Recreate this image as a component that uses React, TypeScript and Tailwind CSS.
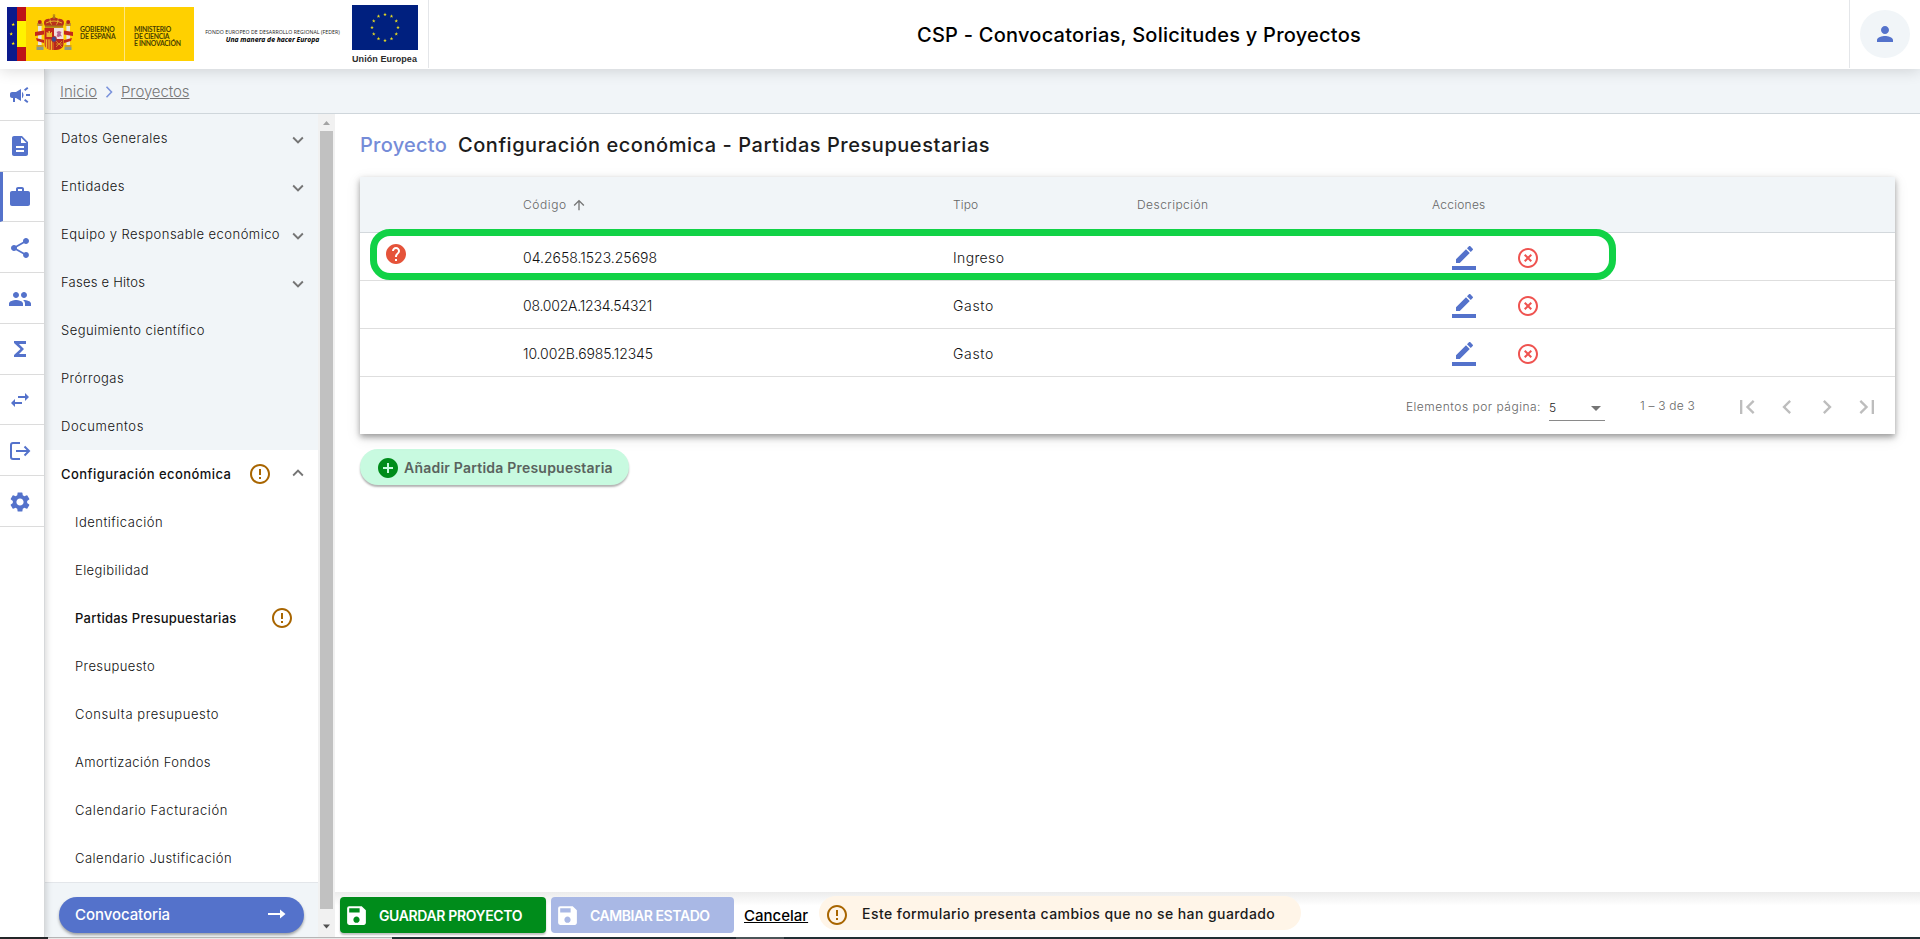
import React from "react";
import {
  MdAddCircle,
  MdArrowDropDown,
  MdArrowUpward,
  MdCampaign,
  MdChevronLeft,
  MdChevronRight,
  MdDescription,
  MdErrorOutline,
  MdExpandLess,
  MdExpandMore,
  MdFirstPage,
  MdFunctions,
  MdHelp,
  MdHighlightOff,
  MdLastPage,
  MdPeople,
  MdPerson,
  MdSave,
  MdSettings,
  MdShare,
  MdSwapHoriz,
  MdWork,
} from "react-icons/md";

function CoatOfArms() {
  return (
    <svg viewBox="0 0 38 38" className="h-[38px] w-[38px]">
      <g>
        <rect x="3" y="10" width="3.6" height="25" fill="#e9e6dc" />
        <rect x="31.4" y="10" width="3.6" height="25" fill="#e9e6dc" />
        <path d="M2 9h5.6v3H2zM30.4 9H36v3h-5.6z" fill="#c8962a" />
        <circle cx="4.8" cy="8" r="2" fill="#b3261c" />
        <circle cx="33.2" cy="8" r="2" fill="#b3261c" />
        <path d="M1.5 33h7v3h-7zM29.5 33h7v3h-7z" fill="#8c9a8a" />
        <path d="M1.5 31h7v2h-7zM29.5 31h7v2h-7z" fill="#d2a021" />
        <path d="M0 18l9-1.6v4L0 22zM38 18l-9-1.6v4l9 1.6z" fill="#c4271b" />
        <path d="M1 24l8 2v3l-7-2zM37 24l-8 2v3l7-2z" fill="#c4271b" />
      </g>
      <path d="M10 12c-3-5 1-8 5-7 1-2 7-2 8 0 4-1 8 2 5 7z" fill="#b8301c" />
      <path d="M11 9q8-4 16 0M15 5.5q0 3 1.5 5M23 5.5q0 3-1.5 5" fill="none" stroke="#e5b52e" strokeWidth="1" />
      <circle cx="19" cy="3.4" r="1.3" fill="#a8791c" />
      <path d="M19 0v3M17.7 1.2h2.6" stroke="#a8791c" strokeWidth=".8" />
      <path d="M10 11.5h18v2.2H10z" fill="#a8791c" />
      <path d="M9.5 14H19v11H9.5z" fill="#c4271b" />
      <path d="M19 14h9.5v11H19z" fill="#f1dfe0" />
      <path d="M9.5 25H19v11c-6 0-9.5-2-9.5-6z" fill="#d4531d" />
      <path d="M19 25h9.5v5c0 4-3.5 6-9.5 6z" fill="#b8281c" />
      <path d="M11.5 23v-5h1v1h1v-2h1.5v2h1v-1h1v5z" fill="#edb92e" />
      <path d="M21.5 22.5l1-3-1-1.5 2.5-1 2.500 1-1 2 1.5 2.5-2-.5-1 1z" fill="#b8618a" />
      <path d="M11.5 25.500v8.500M14 25.500V35M16.500 25.500V36" stroke="#edb92e" strokeWidth="1" />
      <path d="M21 27l6 6M27 27l-6 6M21 30h6.5" stroke="#e09a2a" strokeWidth=".8" />
      <ellipse cx="19" cy="25.2" rx="2.5" ry="3" fill="#3b4c96" stroke="#c4271b" strokeWidth=".8" />
    </svg>
  );
}

const STAR = "M0-1.9L.5-.6 1.8-.6.75.25 1.15 1.55 0 .8-1.15 1.55-.75.25-1.8-.6-.5-.6z";
const EU_STARS = Array.from({ length: 12 }, (_, i) => {
  const a = (i * Math.PI) / 6;
  return { x: 33 + 13 * Math.sin(a), y: 22.5 - 13 * Math.cos(a) };
});

function Header() {
  return (
    <header className="relative z-20 flex h-[69px] shrink-0 bg-white shadow-[0_2px_14px_rgba(0,0,0,0.14)]">
      <div className="flex h-[68px] w-[429px] shrink-0 border-r border-[#e4e6e9] pl-[7px]">
        <div className="mt-[7px] flex h-[54px] w-[187px] bg-[#ffd000]">
          <svg viewBox="0 0 19 54" className="h-[54px] w-[19px] shrink-0">
            <path d="M0 0h10v54H0z" fill="#0b1a8c" />
            <path d="M10 0h9v54h-9z" fill="#be1218" />
            <path d="M10 14h9v26h-9z" fill="#fff200" />
            <path transform="translate(6.2 17.5)" d={STAR} fill="#ffee00" />
            <path transform="translate(4.2 27)" d={STAR} fill="#ffee00" />
            <path transform="translate(6.2 36.5)" d={STAR} fill="#ffee00" />
          </svg>
          <div className="ml-[9px] mt-[7px] shrink-0">
            <CoatOfArms />
          </div>
          <div className="ml-[7px] w-[45px] shrink-0 whitespace-nowrap border-r border-[#ffe680] pt-[19px] font-['Lato'] text-[6.8px] font-bold leading-[7.2px] tracking-[-0.16px] text-[#4a3f00]">
            GOBIERNO
            <br />
            DE ESPAÑA
          </div>
          <div className="ml-[9px] whitespace-nowrap pt-[19px] font-['Lato'] text-[6.8px] font-bold leading-[7.2px] tracking-[-0.24px] text-[#4a3f00]">
            MINISTERIO
            <br />
            DE CIENCIA
            <br />E INNOVACIÓN
          </div>
        </div>
        <div className="ml-[11px] w-[135px] whitespace-nowrap pt-[28px] text-center font-['Open_Sans'] text-[#222]">
          <div className="flex justify-center text-[5.2px] leading-[8px] tracking-[0.06px]">
            FONDO EUROPEO DE DESARROLLO REGIONAL (FEDER)
          </div>
          <div className="text-[6.8px] font-bold italic leading-[8px] text-black">Una manera de hacer Europa</div>
        </div>
        <div className="ml-[12px] mt-[5px] w-[66px]">
          <svg viewBox="0 0 66 45" className="h-[45px] w-[66px]">
            <path d="M0 0h66v45H0z" fill="#00207f" />
            {EU_STARS.map((s, i) => (
              <path key={i} transform={`translate(${s.x} ${s.y})`} d={STAR} fill="#e8dc22" />
            ))}
          </svg>
          <div className="mt-[2px] whitespace-nowrap font-['Liberation_Sans'] text-[9px] font-bold leading-[14px] tracking-[0.08px] text-[#2b2b2b]">
            Unión Europea
          </div>
        </div>
      </div>
      <h1 className="flex-1 pt-[21px] text-center text-[20px] font-medium leading-7 tracking-[0.24px] text-black">
        CSP - Convocatorias, Solicitudes y Proyectos
      </h1>
      <div className="h-[68px] w-[71px] shrink-0 border-l border-[#e4e6e9] pl-[10px] pt-[10px]">
        <div className="flex h-[48px] w-[50px] items-center justify-center rounded-[50%] bg-[#f1f5f8] text-[#5472cb]">
          <MdPerson size={24} />
        </div>
      </div>
    </header>
  );
}

function ExitIcon() {
  return (
    <svg viewBox="0 0 24 24" className="h-6 w-6" fill="none" stroke="currentColor" strokeWidth="2">
      <path d="M12 4H5Q3 4 3 6v12q0 2 2 2h7M8 12h13M16.5 7.5L21 12l-4.5 4.5" />
    </svg>
  );
}

const RAIL = [
  <MdCampaign size={24} />,
  <MdDescription size={24} />,
  <MdWork size={24} />,
  <MdShare size={24} />,
  <MdPeople size={24} />,
  <MdFunctions size={24} />,
  <MdSwapHoriz size={24} />,
  <ExitIcon />,
  <MdSettings size={24} />,
];

function Rail() {
  return (
    <nav className="relative z-10 w-[45px] shrink-0 border-r border-[#d6d8da] bg-white pt-px shadow-[2px_0_6px_rgba(0,0,0,0.14)]">
      <div className="flex h-[457px] flex-col text-[#5472cb]">
        {RAIL.map((icon, i) => (
          <div
            key={i}
            className={
              i === 2
                ? "flex w-full flex-1 items-center border-b border-l-[3px] border-b-[#dcdcdc] border-l-[#5472cb] pl-[5px] pt-px"
                : "flex w-full flex-1 items-center border-b border-[#dcdcdc] pl-[8px] pt-px"
            }
          >
            <span className="flex w-6 justify-center">{icon}</span>
          </div>
        ))}
      </div>
    </nav>
  );
}

const SECTIONS = [
  { label: "Datos Generales", cls: "tracking-[0.48px]", open: true },
  { label: "Entidades", cls: "tracking-[0.52px]", open: true },
  { label: "Equipo y Responsable económico", cls: "tracking-[0.47px]", open: true },
  { label: "Fases e Hitos", cls: "tracking-[0.24px]", open: true },
  { label: "Seguimiento científico", cls: "tracking-[0.46px]", open: false },
  { label: "Prórrogas", cls: "tracking-[0.46px]", open: false },
  { label: "Documentos", cls: "tracking-[0.63px]", open: false },
];

const CHILDREN = [
  { label: "Identificación", cls: "pt-0.5 tracking-[0.5px]" },
  { label: "Elegibilidad", cls: "pt-0.5 tracking-[0.42px]" },
  { label: "Partidas Presupuestarias", cls: "pt-0.5 font-medium text-[#111] tracking-[0.26px]", active: true },
  { label: "Presupuesto", cls: "pt-0.5 tracking-[0.39px]" },
  { label: "Consulta presupuesto", cls: "pt-0.5 tracking-[0.57px]" },
  { label: "Amortización Fondos", cls: "pt-0.5 tracking-[0.43px]" },
  { label: "Calendario Facturación", cls: "pt-0.5 tracking-[0.6px]" },
  { label: "Calendario Justificación", cls: "pt-0.5 tracking-[0.49px]" },
];

function Sidebar() {
  return (
    <aside className="flex w-[290px] shrink-0">
      <div className="flex w-[273px] flex-col bg-[#f1f5f8] text-[13px] font-light text-[#111]">
        {SECTIONS.map((s) => (
          <div key={s.label} className="flex h-12 shrink-0 items-center justify-between whitespace-nowrap pl-4 pr-[9px] pt-px">
            <span className={s.cls}>{s.label}</span>
            {s.open && <MdExpandMore size={22} className="mt-[3px] shrink-0 text-[#757575]" />}
          </div>
        ))}
        <div className="h-[432px] shrink-0 bg-white">
          <div className="flex h-12 items-center whitespace-nowrap pl-4 pr-[9px]">
            <span className="w-[187px] pt-0.5 font-medium tracking-[0.45px]">Configuración económica</span>
            <MdErrorOutline size={24} className="shrink-0 text-[#a86500]" />
            <MdExpandLess size={22} className="mb-[3px] ml-auto shrink-0 text-[#757575]" />
          </div>
          {CHILDREN.map((c) => (
            <div key={c.label} className="flex h-12 items-center whitespace-nowrap pl-[30px]">
              <span className={c.cls}>{c.label}</span>
              {c.active && <MdErrorOutline size={24} className="ml-auto mr-[24px] shrink-0 text-[#a86500]" />}
            </div>
          ))}
        </div>
        <div className="flex-1 border-t border-[#e3e6ea] pl-[14px] pt-[14px]">
          <div className="flex h-9 w-[245px] items-center justify-between rounded-full bg-[#5472cb] pl-4 pr-[18px] text-[15px] font-medium tracking-[-0.07px] text-white shadow-[0_2px_3px_rgba(0,0,0,0.35)]">
            <span className="pt-px">Convocatoria</span>
            <svg viewBox="0 0 18 10" className="mb-[2px] h-[10px] w-[18px]">
              <path d="M0 4h12V0.5L17.5 5 12 9.5V6H0z" fill="#fff" />
            </svg>
          </div>
        </div>
      </div>
      <div className="flex w-[17px] flex-col items-center bg-[#f1f1f1]">
        <svg viewBox="0 0 17 17" className="h-[17px] w-[17px] shrink-0">
          <path d="M5 11h7L8.5 7z" fill="#a3a3a3" />
        </svg>
        <div className="h-[778px] w-[13px] bg-[#c1c1c1]" />
        <svg viewBox="0 0 17 17" className="mt-[9px] h-[17px] w-[17px] shrink-0">
          <path d="M5 6.5h7L8.5 10.5z" fill="#505050" />
        </svg>
      </div>
    </aside>
  );
}

function EditIcon() {
  return (
    <svg viewBox="0 0 24 24" className="h-6 w-6 shrink-0" fill="#5472cb">
      <path d="M17.75 7L14 3.25l-10 10V17h3.75l10-10zm2.96-2.96c.39-.39.39-1.02 0-1.41L18.37.29c-.39-.39-1.02-.39-1.41 0L15 2.25 18.75 6l1.96-1.96z" />
      <path d="M0 20h24v4H0z" />
    </svg>
  );
}

const ROWS = [
  { code: "04.2658.1523.25698", cls: "pt-0.5", type: "Ingreso", typeCls: "pt-0.5 tracking-[0.36px]", help: true },
  { code: "08.002A.1234.54321", cls: "pt-0.5 tracking-[-0.22px]", type: "Gasto", typeCls: "pt-0.5 tracking-[0.66px]", help: false },
  { code: "10.002B.6985.12345", cls: "pt-0.5 tracking-[-0.1px]", type: "Gasto", typeCls: "pt-0.5 tracking-[0.66px]", help: false },
];

function BudgetTable() {
  return (
    <div className="relative h-[257px] w-[1535px] bg-white shadow-[0_3px_6px_rgba(0,0,0,0.35),0_4px_14px_rgba(0,0,0,0.1)]">
      <div className="grid h-14 grid-cols-[163px_430px_184px_295px_1fr] items-center border-b border-[#d3d8dc] bg-[#f1f5f8] text-[12px] font-light text-[#666]">
        <span />
        <span className="flex items-center">
          <span className="tracking-[0.6px]">Código</span>
          <MdArrowUpward size={16} className="ml-[4px] text-[#757575]" />
        </span>
        <span className="tracking-[0.1px]">Tipo</span>
        <span className="tracking-[0.45px]">Descripción</span>
        <span className="tracking-[0.25px]">Acciones</span>
      </div>
      {ROWS.map((r) => (
        <div
          key={r.code}
          className="grid h-12 grid-cols-[163px_430px_184px_295px_1fr] items-center border-b border-[#dedede] text-[14px] font-light text-[#111]"
        >
          <span className="pl-6">{r.help && <MdHelp size={24} className="mb-[5px] text-[#e5533a]" />}</span>
          <span className={r.cls}>{r.code}</span>
          <span className={r.typeCls}>{r.type}</span>
          <span />
          <span className="flex gap-10 pl-5 pt-[3px]">
            <EditIcon />
            <MdHighlightOff size={24} className="text-[#ef5350]" />
          </span>
        </div>
      ))}
      <div className="flex h-[57px] items-center justify-end pr-2 text-[12px] font-light text-[#666]">
        <span className="mt-[3px] tracking-[0.5px]">Elementos por página:</span>
        <div className="ml-2 mt-[7px] flex h-6 w-[56px] items-center justify-between border-b border-[#8a8a8a] pb-px text-[#222]">
          <span>5</span>
          <MdArrowDropDown size={24} className="-mr-[3px] text-[#757575]" />
        </div>
        <span className="ml-[35px] w-[55px] tracking-[0.2px]">1 – 3 de 3</span>
        <div className="ml-8 mt-[3px] flex text-[#bdbdbd]">
          {[MdFirstPage, MdChevronLeft, MdChevronRight, MdLastPage].map((Icon, i) => (
            <span key={i} className="flex h-10 w-10 items-center justify-center">
              <Icon size={28} />
            </span>
          ))}
        </div>
      </div>
      <div className="absolute left-[10px] top-[52px] h-[51px] w-[1246px] rounded-[20px] border-[7px] border-[#11d246]" />
    </div>
  );
}

function ActionBar() {
  return (
    <footer className="flex h-[45px] shrink-0 items-start bg-linear-to-b from-[#ececec] to-white to-30% pl-[5px] pt-[5px]">
      <button className="flex h-9 w-[206px] items-center rounded bg-[#008c1b] pl-[4px] text-[14px] font-semibold text-white shadow-[0_2px_2px_rgba(0,0,0,0.25)]">
        <MdSave size={25} className="mr-[10px]" />
        <span className="pt-px tracking-[-0.37px]">GUARDAR PROYECTO</span>
      </button>
      <button className="ml-[5px] flex h-9 w-[183px] items-center rounded bg-[#a9b8e5] pl-[4px] text-[14px] font-semibold text-white">
        <MdSave size={25} className="mr-[10px]" />
        <span className="pt-px tracking-[-0.43px]">CAMBIAR ESTADO</span>
      </button>
      <a className="ml-[10px] mt-[7px] text-[15px] font-medium leading-6 text-black underline">Cancelar</a>
      <div className="-mt-px ml-[11px] flex h-[34px] w-[482px] items-center rounded-full bg-[#fff5e8] pl-[6px] text-[#1a1a1a]">
        <MdErrorOutline size={24} className="mt-[4px] shrink-0 text-[#a86500]" />
        <span className="ml-[13px] whitespace-nowrap text-[14px] font-medium tracking-[0.42px]">
          Este formulario presenta cambios que no se han guardado
        </span>
      </div>
    </footer>
  );
}

export default function App() {
  return (
    <div className="flex h-[939px] w-[1920px] flex-col overflow-hidden bg-white font-['Inter',sans-serif]">
      <Header />
      <div className="flex h-[868px] shrink-0">
        <Rail />
        <div className="flex min-w-0 flex-1 flex-col">
          <div className="flex h-[45px] shrink-0 items-center border-b border-[#cfd6db] bg-[#f1f5f8] pl-[15px] pt-0.5 text-[15px] font-light text-[#777]">
            <span className="underline">Inicio</span>
            <svg viewBox="0 0 8 12" className="mx-[8px] h-[12px] w-[8px]" fill="none" stroke="#7b93dc" strokeWidth="1.6">
              <path d="M1.5.8L6.5 6 1.5 11.2" />
            </svg>
            <span className="tracking-[-0.1px] underline">Proyectos</span>
          </div>
          <div className="flex min-h-0 flex-1">
            <Sidebar />
            <main className="flex min-w-0 flex-1 flex-col">
              <div className="flex-1 pl-[25px] pt-[17px]">
                <h2 className="flex text-[20px] font-medium leading-7 text-[#1c1c1c]">
                  <span className="w-[98px] tracking-[0.25px] text-[#758cd8]">Proyecto</span>
                  <span className="tracking-[0.54px]">Configuración económica - Partidas Presupuestarias</span>
                </h2>
                <div className="pt-[18px]">
                  <BudgetTable />
                </div>
                <button className="mt-[15px] flex h-9 w-[269px] items-center rounded-full bg-[#c8fae0] pl-4 text-[14px] font-semibold text-[#5a635e] shadow-[0_2px_2px_rgba(0,0,0,0.3)]">
                  <MdAddCircle size={24} className="mt-[2px] text-[#008c1b]" />
                  <span className="ml-[4px] tracking-[0.22px]">Añadir Partida Presupuestaria</span>
                </button>
              </div>
              <ActionBar />
            </main>
          </div>
        </div>
      </div>
      <div className="flex h-[2px] shrink-0">
        <div className="w-12 bg-[#26292b]" />
        <div className="w-[344px] border-t border-[#b5b5b5] bg-[#e9e9e9]" />
        <div className="w-[344px] bg-[#222f34]" />
        <div className="w-12 bg-[#4b5558]" />
        <div className="flex-1 bg-[#222f34]" />
      </div>
    </div>
  );
}
